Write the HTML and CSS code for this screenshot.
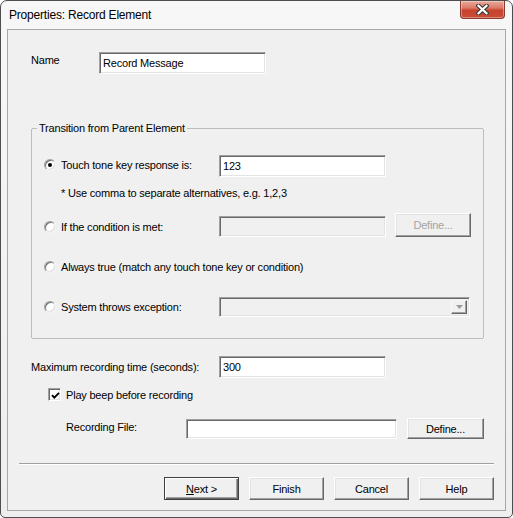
FILE: index.html
```html
<!DOCTYPE html>
<html lang="en">
<head>
<meta charset="utf-8">
<title>Properties: Record Element</title>
<link rel="stylesheet" href="styles.css">
</head>
<body>
<div class="window">
  <div class="titlebar">
    <span class="title">Properties: Record Element</span>
    <div class="close">
      <svg width="13" height="11" viewBox="0 0 13 11"><path d="M2.5 1.8 L10.5 9.2 M10.5 1.8 L2.5 9.2" stroke="#3d3d3d" stroke-width="4.4" stroke-linecap="square" fill="none"/><path d="M2.5 1.8 L10.5 9.2 M10.5 1.8 L2.5 9.2" stroke="#ffffff" stroke-width="2.2" stroke-linecap="square" fill="none"/></svg>
    </div>
  </div>
  <div class="client">
    <div class="name-row">
      <span class="lbl name-lbl">Name</span>
      <div class="edit name-edit">Record Message</div>
    </div>

    <fieldset class="group">
      <legend>Transition from Parent Element</legend>
      <div class="opt row1">
        <span class="choice up"><span class="radio on"></span><span>Touch tone key response is:</span></span>
        <div class="edit w167 h22">123</div>
      </div>
      <p class="note">* Use comma to separate alternatives, e.g. 1,2,3</p>
      <div class="opt row2">
        <span class="choice down"><span class="radio"></span><span>If the condition is met:</span></span>
        <div class="edit disabled w167 h21 drop"></div>
        <div class="btn dis define1">Define...</div>
      </div>
      <div class="opt row3">
        <span class="choice"><span class="radio"></span><span>Always true (match any touch tone key or condition)</span></span>
      </div>
      <div class="opt row4">
        <span class="choice"><span class="radio"></span><span>System throws exception:</span></span>
        <div class="combo">
          <div class="arrow"><svg width="7" height="4" viewBox="0 0 7 4"><path d="M0 0 H7 L3.5 4 Z" fill="#9a9a9a"/></svg></div>
        </div>
      </div>
    </fieldset>

    <div class="max-row">
      <span class="lbl max-lbl">Maximum recording time (seconds):</span>
      <div class="edit w167 h22">300</div>
    </div>

    <div class="chk-row">
      <span class="check"><svg width="9" height="9" viewBox="0 0 9 9"><path d="M1 4.2 L3.3 6.6 L8 1.8" stroke="#000" stroke-width="1.9" fill="none"/></svg></span>
      <span>Play beep before recording</span>
    </div>

    <div class="rec-row">
      <span class="lbl rec-lbl">Recording File:</span>
      <div class="edit rec-edit"></div>
      <div class="btn define2">Define...</div>
    </div>

    <div class="sep"></div>

    <div class="buttons">
      <div class="btn dlg default"><span><u>N</u>ext &gt;</span></div>
      <div class="btn dlg">Finish</div>
      <div class="btn dlg">Cancel</div>
      <div class="btn dlg">Help</div>
    </div>
  </div>
</div>
</body>
</html>
```
FILE: styles.css
```css
* { box-sizing: border-box; }
html, body { margin: 0; padding: 0; }
body {
  width: 513px;
  height: 518px;
  overflow: hidden;
  background: #ffffff;
  font-family: "Liberation Sans", Arial, sans-serif;
  font-size: 11px;
  letter-spacing: -0.2px;
  color: #000;
}
.window {
  width: 513px;
  height: 518px;
  border: 1px solid #4e4e4e;
  border-radius: 7px 7px 5px 5px;
  background: linear-gradient(#f7f7f7, #eeeeee);
  display: flex;
  flex-direction: column;
  padding: 0 6px 6px 6px;
}
.titlebar {
  height: 28px;
  display: flex;
  justify-content: space-between;
  align-items: flex-start;
}
.title {
  font-size: 12px;
  line-height: 14px;
  letter-spacing: -0.2px;
  margin: 7px 0 0 2px;
  color: #000;
}
.close {
  width: 45px;
  height: 18px;
  margin-right: 1px;
  border: 1px solid #8a3a2e;
  border-top: none;
  border-radius: 0 0 4px 4px;
  background: linear-gradient(#e9ab9c 0%, #dc7a66 40%, #c8432d 55%, #c94c36 100%);
  box-shadow: inset 0 0 0 1px rgba(255,255,255,0.35);
  display: flex;
  align-items: center;
  justify-content: center;
}
.client {
  flex: 1;
  border: 1px solid #a7a7a7;
  background: #f0f0f0;
  padding-left: 23px;
}
.lbl { display: inline-block; }

/* sunken edit */
.edit {
  background: #fff;
  border: 1px solid;
  border-color: #a0a0a0 #ffffff #ffffff #a0a0a0;
  box-shadow: inset 1px 1px 0 #696969, inset -1px -1px 0 #e3e3e3;
  padding: 0 3px;
  display: flex;
  align-items: center;
}
.edit.disabled { background: #f0f0f0; }
.w167 { width: 167px; }
.h22 { height: 22px; }
.h21 { height: 21px; }

.name-row {
  display: flex;
  align-items: center;
  height: 22px;
  margin-top: 22px;
}
.name-lbl { width: 68px; margin-bottom: 6px; }
.name-edit { width: 167px; height: 22px; }

/* group box */
.group {
  margin: 48px 0 0 0;
  width: 453px;
  min-width: 0;
  border: 1px solid #bdbdbd;
  border-radius: 2px;
  padding: 0 0 21px 0;
}
.group legend {
  padding: 0 2px;
  margin-left: 5px;
  line-height: 13px;
}
.opt {
  display: flex;
  align-items: center;
  margin-left: 12px;
}
.choice {
  width: 175px;
  display: flex;
  align-items: center;
  gap: 5px;
  white-space: nowrap;
}
.choice.up { margin-bottom: 3px; }
.choice.down { margin-top: 4px; }
.radio {
  width: 12px;
  height: 12px;
  flex: none;
  border-radius: 50%;
  border: 1px solid;
  border-color: #a0a0a0 #f4f4f4 #f4f4f4 #a0a0a0;
  box-shadow: inset 1px 1px 0 #6f6f6f, inset -1px -1px 0 #dcdcdc;
  background: #fff;
  display: flex;
  align-items: center;
  justify-content: center;
}
.radio.on::after {
  content: "";
  width: 4px;
  height: 4px;
  border-radius: 50%;
  background: #000;
}
.row1 { margin-top: 20px; height: 22px; }
.note {
  margin: 10px 0 0 29px;
  line-height: 13px;
}
.row2 { margin-top: 13px; height: 24px; }
.drop { margin-top: 3px; }
.row3 { margin-top: 22px; height: 16px; }
.row4 { margin-top: 22px; height: 20px; }

.combo {
  width: 251px;
  height: 20px;
  background: #f0f0f0;
  border: 1px solid;
  border-color: #a0a0a0 #ffffff #ffffff #a0a0a0;
  box-shadow: inset 1px 1px 0 #696969, inset -1px -1px 0 #e3e3e3;
  padding: 2px;
  display: flex;
  justify-content: flex-end;
}
.arrow {
  width: 16px;
  height: 100%;
  background: #f0f0f0;
  border: 1px solid;
  border-color: #f6f6f6 #696969 #696969 #f6f6f6;
  box-shadow: inset -1px -1px 0 #a0a0a0;
  display: flex;
  align-items: center;
  justify-content: center;
}

/* buttons */
.btn {
  background: #f0f0f0;
  border: 1px solid;
  border-color: #ffffff #696969 #696969 #ffffff;
  box-shadow: inset -1px -1px 0 #a0a0a0, inset 1px 1px 0 #e3e3e3;
  display: flex;
  align-items: center;
  justify-content: center;
  white-space: nowrap;
}
.btn.dis { color: #a3a3a3; }
.define1 { width: 76px; height: 24px; margin-left: 9px; }

.max-row {
  display: flex;
  align-items: center;
  height: 22px;
  margin-top: 17px;
}
.max-lbl { width: 188px; }

.chk-row {
  display: flex;
  align-items: center;
  gap: 5px;
  height: 13px;
  margin: 10px 0 0 17px;
}
.check {
  width: 13px;
  height: 13px;
  background: #fff;
  border: 1px solid;
  border-color: #a0a0a0 #ffffff #ffffff #a0a0a0;
  box-shadow: inset 1px 1px 0 #696969, inset -1px -1px 0 #e3e3e3;
  display: flex;
  align-items: center;
  justify-content: center;
  padding: 1px 0 0 1px;
}

.rec-row {
  display: flex;
  align-items: center;
  height: 21px;
  margin: 17px 0 0 35px;
}
.rec-lbl { width: 120px; margin-bottom: 3px; }
.rec-edit { width: 211px; height: 20px; align-self: flex-end; }
.define2 { width: 77px; height: 21px; margin-left: 10px; }

.sep {
  margin: 24px 0 0 -12px;
  width: 475px;
  border-top: 1px solid #a0a0a0;
  border-bottom: 1px solid #ffffff;
}

.buttons {
  display: flex;
  gap: 10px;
  margin: 12px 0 0 133px;
}
.dlg { width: 75px; height: 23px; }
.dlg.default {
  border: 1px solid #3f3f3f;
  box-shadow: inset 1px 1px 0 #ffffff, inset -1px -1px 0 #696969, inset -2px -2px 0 #a0a0a0;
}
.dlg u { text-decoration: underline; }
```
